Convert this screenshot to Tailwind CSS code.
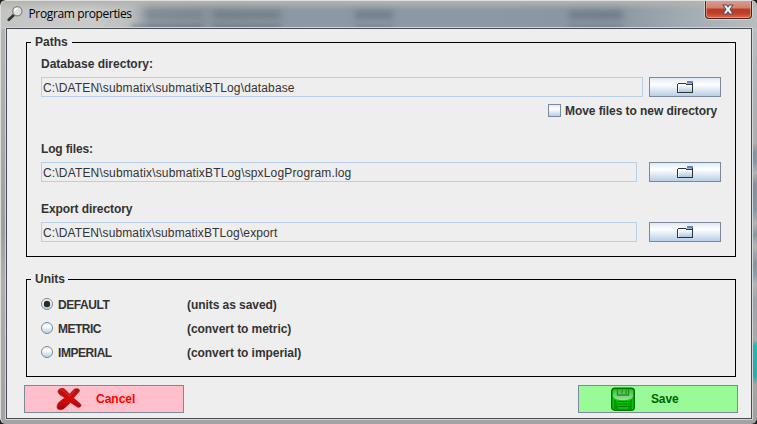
<!DOCTYPE html>
<html lang="en">
<head>
<meta charset="utf-8">
<title>Program properties</title>
<script src="https://cdn.jsdelivr.net/npm/@tailwindcss/browser@4"></script>
</head>
<body class="w-[757px] h-[424px] overflow-hidden bg-[#222]">
<svg class="absolute w-0 h-0">
  <defs>
    <linearGradient id="paper" x1="0" y1="0" x2="0" y2="1"><stop offset="0" stop-color="#fff"/><stop offset="1" stop-color="#a9c8e4"/></linearGradient>
    <linearGradient id="steel" x1="0" y1="0" x2="0" y2="1"><stop offset="0" stop-color="#dfe9f3"/><stop offset=".35" stop-color="#fff"/><stop offset="1" stop-color="#b0cbe3"/></linearGradient>
    <linearGradient id="red" x1="0" y1="0" x2="0" y2="1"><stop offset="0" stop-color="#b80d0d"/><stop offset=".5" stop-color="#d80a0a"/><stop offset="1" stop-color="#a80505"/></linearGradient>
    <linearGradient id="shine" x1="0" y1="0" x2="0" y2="1"><stop offset="0" stop-color="#2fc52f"/><stop offset="1" stop-color="#a5dca5"/></linearGradient>
    <symbol id="folder" viewBox="0 0 16 13">
      <path fill="#333" d="M1 2h9v1H1zM0 3h1v9H0zM1 11h15v1H1zM15 2h1v10h-1zM9 3h7v1H9z"/>
      <path fill="#fff" d="M1 3h8v1h6v7H1z"/>
      <path fill="url(#paper)" d="M2 4h13v7H2z"/>
      <path fill="#6382bf" d="M10 0h6v2h-6z"/><path fill="#9bb7d9" d="M9 2h6v1H9z"/><path fill="#333" d="M9 3h6v1H9z"/>
    </symbol>
  </defs>
</svg>
<div class="w-[757px] h-[424px] flex flex-col rounded-[6px] border-t border-l border-[#dedede] overflow-hidden bg-[linear-gradient(to_bottom,#b4b6b8_0,#aeb0b2_90px,#9c9fa0_230px,#afafaf_280px,#a2a2a4_424px)] relative font-['Liberation_Sans',Arial,sans-serif] text-[12px] text-[#333]">
  <!-- glass frame: blurred window content behind the title bar and the right edge -->
  <div class="absolute left-0 top-0 w-full h-[28px] bg-[linear-gradient(to_right,#c3c4c4_0,#cacbc9_90px,#bbbebf_130px,#909aa3_150px,#89949e_210px,#8c99a4_300px,#8c99a4_480px,#8995a1_610px,#a4adb4_690px,#b9bdbf_757px)]"></div>
  <div class="absolute left-0 top-0 w-full h-[9px] bg-[linear-gradient(to_bottom,#b4b4ae,#b4b4ae00)]"></div>
  <div class="absolute left-[142px] top-[10px] h-[8px] w-[60px] bg-[#56616c]/30 blur-[3px]"></div>
  <div class="absolute left-[130px] top-[23px] h-[5px] w-[72px] bg-[#56616c]/40 blur-[2px]"></div>
  <div class="absolute left-[212px] top-[10px] h-[8px] w-[68px] bg-[#56616c]/45 blur-[3px]"></div>
  <div class="absolute left-[212px] top-[23px] h-[5px] w-[68px] bg-[#56616c]/40 blur-[2px]"></div>
  <div class="absolute left-[354px] top-[10px] h-[8px] w-[38px] bg-[#56616c]/50 blur-[3px]"></div>
  <div class="absolute left-[354px] top-[24px] h-[4px] w-[38px] bg-[#56616c]/35 blur-[2px]"></div>
  <div class="absolute left-[568px] top-[10px] h-[8px] w-[54px] bg-[#56616c]/50 blur-[3px]"></div>
  <div class="absolute left-[568px] top-[24px] h-[4px] w-[54px] bg-[#56616c]/35 blur-[2px]"></div>
  <div class="absolute left-[752px] top-[27px] w-[5px] h-[390px] bg-[linear-gradient(to_bottom,#bcbfc1_0,#adb3b8_60px,#b0b0b0_115px,#8694a2_125px,#8a97a4_135px,#b4b5b5_145px,#8492a0_156px,#8796a4_182px,#b2b2b3_195px,#8a97a4_207px,#b5b5b5_217px,#8894a0_236px,#92a0ac_248px,#b4b4b4_256px,#9fa4aa_272px,#aaa_312px,#25b4b6_318px,#2cabad_348px,#a8a89e_357px,#a0a0a0_390px)]"></div>

  <header class="relative h-[26px] flex items-start pl-[6px] pr-[5px]">
    <svg class="mt-[5px] w-[16px] h-[16px]" viewBox="0 0 16 16">
      <path d="M1.8 13.8 6.5 9.2" stroke="#333" stroke-width="2.7" stroke-linecap="round"/>
      <circle cx="10.3" cy="5.3" r="4.6" fill="#dbe0e0" stroke="#858585" stroke-width="1.3"/>
      <path d="M7.6 5.5A3 3 0 0 1 10.5 2.5" stroke="#fff" stroke-width="1.4" fill="none"/>
    </svg>
    <h1 class="ml-[5.5px] mt-[4px] font-['Open_Sans','Noto_Sans',sans-serif] text-[12px] leading-[18px] tracking-[-0.37px] text-black whitespace-nowrap">Program properties</h1>
    <button aria-label="Close" class="ml-auto -mt-px mr-0 w-[47px] h-[19px] rounded-b-[4px] border border-t-0 border-[#4c1f20] bg-[linear-gradient(to_bottom,#dba090_0,#d08070_8px,#b83e28_9px,#bd3d25_13px,#dc6b4a_18px)] shadow-[inset_0_0_0_1px_#f0b5a599,0_0_0_1px_#dce0e2aa] flex items-start justify-center">
      <svg class="mt-[4px] mr-px w-[12px] h-[11px]" viewBox="0 0 13 12"><path d="M1 1h3.8l1.7 2.3L8.2 1H12L8.7 5.8 12 11H8.2L6.5 8.4 4.8 11H1l3.3-5.2z" fill="#f4f4f4" stroke="#4e5367" stroke-width="1.1" stroke-linejoin="round"/></svg>
    </button>
  </header>

  <div class="relative ml-[4px] w-[748px] h-[393px] border border-[#d3d6d8] rounded-[1px]">
   <main class="w-[746px] h-[391px] border border-[#474c54] bg-[#eee] pt-[13px] px-[17px]">
    <section class="ml-[2px] w-[710px] h-[215px] border border-black px-[14px]">
      <h2 class="-ml-[10px] -mt-[8px] w-[41px] pl-[4px] bg-[#eee] font-bold leading-[15px] whitespace-nowrap">Paths</h2>
      <p class="mt-[6px] font-bold leading-[16px]">Database directory:</p>
      <div class="mt-[5px] flex justify-between w-[680px]">
        <div class="w-[602px] h-[20px] border border-[#b8cfe5] pl-px leading-[20px] tracking-[0.145px]">C:\DATEN\submatix\submatixBTLog\database</div>
        <button class="w-[72px] h-[20px] border border-[#7a8a99] bg-[linear-gradient(to_bottom,#dfe9f3_0,#fff_35%,#b8cfe5_100%)] flex justify-center"><svg class="mt-[3px] w-[16px] h-[13px]"><use href="#folder"/></svg></button>
      </div>
      <label class="mt-[6px] ml-[507px] flex items-center h-[15px] gap-[4px] font-bold whitespace-nowrap tracking-[-0.07px]">
        <span class="w-[13px] h-[13px] border border-[#7a8a99] bg-[linear-gradient(to_bottom,#dfe9f3_0,#fff_35%,#b8cfe5_100%)]"></span>Move files to new directory
      </label>
      <p class="mt-[23px] font-bold leading-[16px] tracking-[-0.15px]">Log files:</p>
      <div class="mt-[5px] flex justify-between w-[680px]">
        <div class="w-[596px] h-[20px] border border-[#b8cfe5] pl-px leading-[20px] tracking-[0.16px]">C:\DATEN\submatix\submatixBTLog\spxLogProgram.log</div>
        <button class="w-[72px] h-[20px] border border-[#7a8a99] bg-[linear-gradient(to_bottom,#dfe9f3_0,#fff_35%,#b8cfe5_100%)] flex justify-center"><svg class="mt-[3px] w-[16px] h-[13px]"><use href="#folder"/></svg></button>
      </div>
      <p class="mt-[19px] font-bold leading-[16px] tracking-[-0.08px]">Export directory</p>
      <div class="mt-[5px] flex justify-between w-[680px]">
        <div class="w-[596px] h-[20px] border border-[#b8cfe5] pl-px leading-[20px] tracking-[0.12px]">C:\DATEN\submatix\submatixBTLog\export</div>
        <button class="w-[72px] h-[20px] border border-[#7a8a99] bg-[linear-gradient(to_bottom,#dfe9f3_0,#fff_35%,#b8cfe5_100%)] flex justify-center"><svg class="mt-[3px] w-[16px] h-[13px]"><use href="#folder"/></svg></button>
      </div>
    </section>

    <section class="mt-[22px] ml-[2px] w-[710px] h-[98px] border border-black px-[14px] font-bold">
      <h2 class="-ml-[10px] -mt-[8px] w-[37px] pl-[4px] bg-[#eee] leading-[15px]">Units</h2>
      <div class="mt-[6px] grid grid-cols-[17px_129px_auto] auto-rows-[24px] items-center leading-[16px] tracking-[-0.06px]">
        <svg class="w-[12px] h-[12px] -mt-[2px]" viewBox="0 0 12 12"><circle cx="6" cy="6" r="5.5" fill="url(#steel)" stroke="#7a8a99"/><circle cx="6" cy="6" r="3.2" fill="#2b2b2b"/></svg><span class="tracking-[-0.45px]">DEFAULT</span><span>(units as saved)</span>
        <svg class="w-[12px] h-[12px] -mt-[2px]" viewBox="0 0 12 12"><circle cx="6" cy="6" r="5.5" fill="url(#steel)" stroke="#7a8a99"/></svg><span class="tracking-[-0.5px]">METRIC</span><span>(convert to metric)</span>
        <svg class="w-[12px] h-[12px] -mt-[2px]" viewBox="0 0 12 12"><circle cx="6" cy="6" r="5.5" fill="url(#steel)" stroke="#7a8a99"/></svg><span class="tracking-[-0.45px]">IMPERIAL</span><span>(convert to imperial)</span>
      </div>
    </section>

    <footer class="mt-[8px] w-[714px] flex justify-between font-bold">
      <button class="w-[160px] h-[28px] border border-[#7a8a99] bg-[#ffc0cb] text-[#f00] flex items-center pl-[31px] gap-[14px]">
        <svg class="w-[26px] h-[24px]" viewBox="0 0 26 24"><path d="M2.500 3C4 .9 8 .8 10 3.500L13.500 7.200 18 2.500C20.500 .8 24 1.800 23.500 4L17.500 11 24.500 17C26 19.200 23.500 20.800 21.500 20L14.500 15.500 8.500 21C6.500 23.200 2 23.300 1.200 20.800 .6 17.500 3 15 5.500 13.200L9 10.700 4.300 8C2.500 6.500 1.500 4.800 2.500 3Z" fill="url(#red)" stroke="#9c1616" stroke-width=".7"/><path d="M4 3.200C6 2.300 7.500 3.500 9 5.300L13.500 9.300 19 3.700" fill="none" stroke="#e05050" stroke-width=".7"/></svg>
        Cancel
      </button>
      <button class="w-[160px] h-[28px] border border-[#7a8a99] bg-[#98fb98] text-[#006400] flex items-center pl-[32px] gap-[16px] tracking-[-0.15px]">
        <svg class="w-[24px] h-[24px] -mt-px" viewBox="0 0 24 24"><rect x=".7" y="1.200" width="22.600" height="22" rx="3" fill="#00c800" stroke="#087008" stroke-width="1.400"/><path d="M2 4.500Q2 2.500 4 2.500H20Q22 2.500 22 4.500V9.500Q20 13.300 12 13.300T2 9.500Z" fill="url(#shine)"/><path d="M6.500 2V8H17.500V2M11 3V6.500M15 3v4" fill="none" stroke="#259025" stroke-width="1.300"/><path d="M4 22V13M20 22V13M6 22V14.500M18 22V14.500" stroke="#087008" stroke-width="1.100"/><path d="M7.500 14.500h9M7.500 17h9M7.500 19.500h9" stroke="#086a08" stroke-width="1.200"/></svg>
        Save
      </button>
    </footer>
   </main>
  </div>
</div>
</body>
</html>
